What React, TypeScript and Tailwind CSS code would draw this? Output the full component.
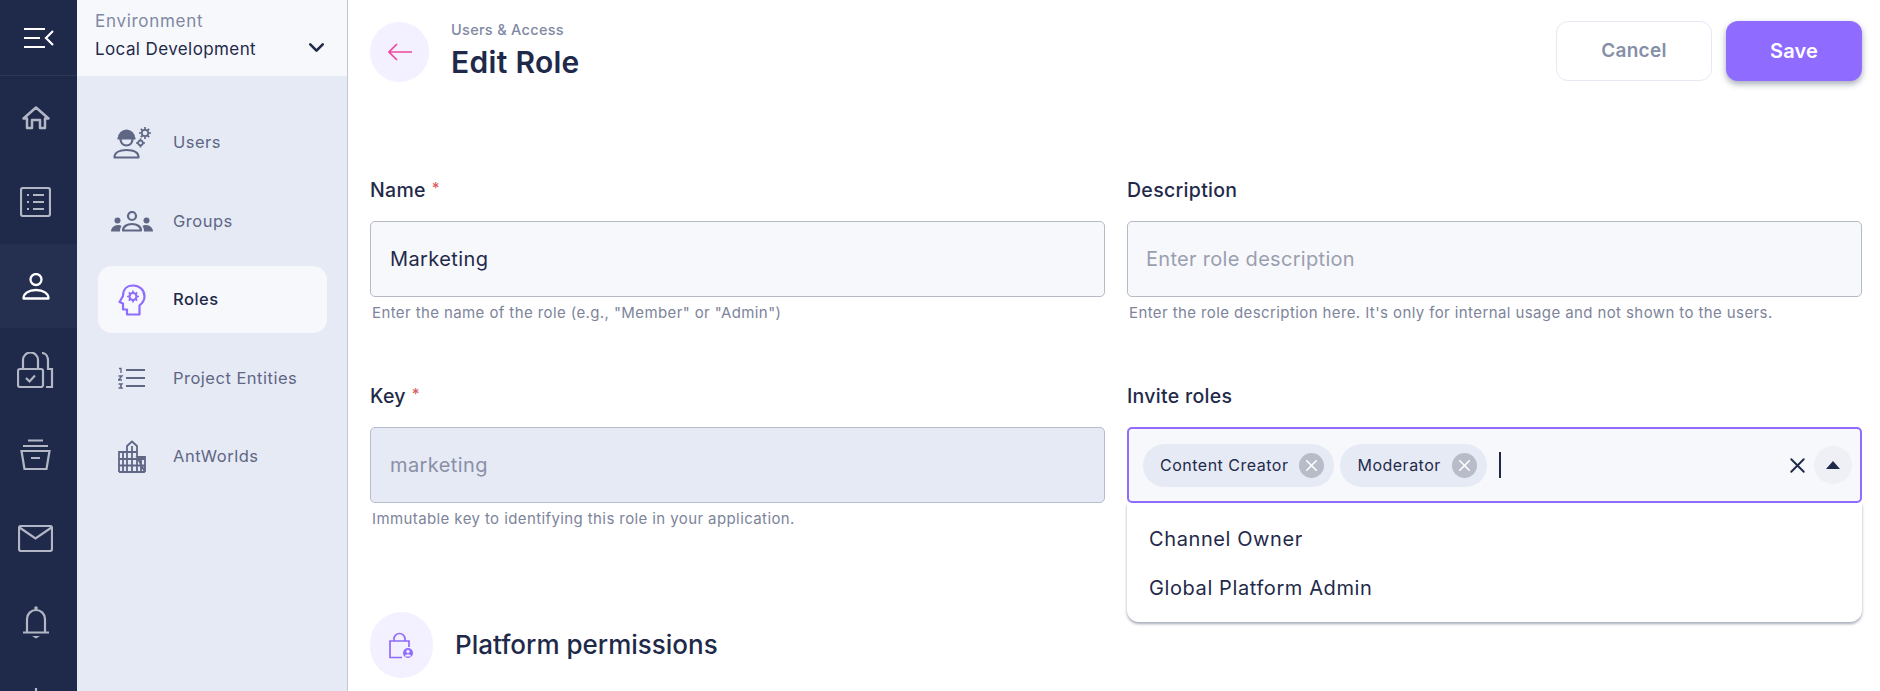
import { ChevronDown, X } from 'lucide-react';

function MenuIcon() {
    return (
        <svg width="32" height="22" viewBox="0 0 32 22" fill="none" stroke="#fff" strokeWidth="2.200">
            <path d="M1 2h21M1 11h16M1 20h21M30 4l-7 7 7 7" />
        </svg>
    );
}

function HomeIcon() {
    return (
        <svg width="28" height="24" viewBox="0 0 28 24" fill="none" stroke="#b3b7c5" strokeWidth="2.500">
            <path d="M1.500 12.500 14 1.500l12.500 11H23V22h-5v-8h-8v8H5v-9.500z" strokeLinejoin="round" />
        </svg>
    );
}

function ListIcon() {
    return (
        <svg width="31" height="30" viewBox="0 0 31 30" fill="none" stroke="#b3b7c5" strokeWidth="2.200">
            <rect x="1" y="1" width="29" height="28" rx="2" />
            <path d="M7 8h2M7 15h2M7 22h2M13 8h11M13 15h11M13 22h11" />
        </svg>
    );
}

function UserIcon() {
    return (
        <svg width="28" height="27" viewBox="0 0 28 27" fill="none" stroke="#fff" strokeWidth="2.300">
            <circle cx="14" cy="6.500" r="5.500" />
            <path d="M1.500 25.500c0-5 5-8.500 12.500-8.500s12.500 3.500 12.500 8.500z" strokeLinejoin="round" />
        </svg>
    );
}

function LocksIcon() {
    return (
        <svg width="37" height="36" viewBox="0 0 37 36" fill="none" stroke="#b3b7c5" strokeWidth="2.200">
            <rect x="1" y="17" width="25" height="18" rx="2" />
            <path d="M6 17V8a7.500 7.500 0 0 1 15 0v9M25 1c4 0 6 3.500 6 8v8M30 17h5v18h-6" />
            <path d="m9 26 3.500 3.500L18 23.500" />
        </svg>
    );
}

function BoxIcon() {
    return (
        <svg width="31" height="31" viewBox="0 0 31 31" fill="none" stroke="#b3b7c5" strokeWidth="2.200">
            <path d="M8 1.500h15M3 7h25M1.500 12h28l-3 18h-22zM11 19h9" />
        </svg>
    );
}

function MailIcon() {
    return (
        <svg width="35" height="27" viewBox="0 0 35 27" fill="none" stroke="#b3b7c5" strokeWidth="2.200">
            <rect x="1" y="1" width="33" height="25" rx="2" />
            <path d="m1.500 2.500 16 11 16-11" />
        </svg>
    );
}

function BellIcon() {
    return (
        <svg width="28" height="34" viewBox="0 0 28 34" fill="none" stroke="#b3b7c5" strokeWidth="2.200">
            <path d="M5 27V14a9 9 0 0 1 18 0v13M1 27.500h26" />
            <circle cx="14" cy="3" r="1.800" fill="#b3b7c5" stroke="none" />
            <path d="M10 31h8l-4 2.500z" fill="#b3b7c5" stroke="none" />
        </svg>
    );
}

function MoreIcon() {
    return (
        <svg width="28" height="36" viewBox="0 0 28 36" fill="none" stroke="#b3b7c5" strokeWidth="2.200">
            <path d="M14 0v36" />
        </svg>
    );
}

function UsersGearIcon() {
    return (
        <svg width="38" height="32" viewBox="0 0 38 32" fill="none" stroke="#5f6785" strokeWidth="2.200">
            <path d="M6 11a7.500 7.500 0 0 1 15 0z" fill="#5f6785" />
            <path d="M4.500 11.500h18M7.500 12c0 4 2.800 6.500 6 6.500s6-2.500 6-6.500" />
            <path d="M1.500 30.500c0-5 5-7.500 12-7.500s12 2.500 12 7.500z" strokeLinejoin="round" />
            <g strokeWidth="1.700">
                <circle cx="32" cy="6" r="3.200" />
                <path d="M32 0v2.500M32 9.500V12M26 6h2.500M35.500 6H38M27.800 1.800l1.800 1.800M34.400 8.400l1.800 1.800M27.800 10.200l1.800-1.800M34.400 3.600l1.800-1.800" />
                <circle cx="27.500" cy="16" r="2.300" />
                <path d="M27.500 11.500v2M27.500 18.500v2M23 16h2M30 16h2" />
            </g>
        </svg>
    );
}

function GroupsIcon() {
    return (
        <svg width="42" height="21" viewBox="0 0 42 21" fill="#5f6785">
            <circle cx="21" cy="5" r="4" fill="none" stroke="#5f6785" strokeWidth="2.200" />
            <path d="M12 19.500c0-4 4-6.500 9-6.500s9 2.500 9 6.500z" fill="none" stroke="#5f6785" strokeWidth="2.200" strokeLinejoin="round" />
            <circle cx="6.500" cy="9.500" r="3" />
            <circle cx="35.500" cy="9.500" r="3" />
            <path d="M0 20.500c0-3.500 3-6.500 7-6.500 1.500 0 2.500.3 3.500 1-1 1.500-1.500 3.500-1.500 5.500zM42 20.500c0-3.500-3-6.500-7-6.500-1.500 0-2.500.3-3.500 1 1 1.500 1.500 3.500 1.500 5.500z" />
        </svg>
    );
}

function RolesIcon() {
    return (
        <svg width="28" height="32" viewBox="0 0 28 32" fill="none" stroke="#8f6bff" strokeWidth="2.200">
            <path d="M9 30.500v-5H5v-6l-3.500-1.500L5 12C5 5.500 9 1.500 15 1.500c6.500 0 11.500 4.500 11.500 11 0 4-2 6.500-5 9v9z" strokeLinejoin="round" />
            <circle cx="15" cy="12.500" r="3.500" />
            <path d="M15 6.500V9M15 16v2.500M9 12.500h2.500M18.500 12.500H21M10.800 8.300l1.800 1.800M17.400 14.900l1.800 1.800M10.800 16.700l1.800-1.800M17.400 10.100l1.800-1.800" strokeWidth="1.700" />
        </svg>
    );
}

function EntitiesIcon() {
    return (
        <svg width="28" height="22" viewBox="0 0 28 22" fill="none" stroke="#5f6785">
            <path d="M8 3h19M8 11h19M8 19h19" strokeWidth="2.200" />
            <path d="M1 1.500h2V6M0.500 9h3.500l-3.500 4h3.500M0.500 17h3.500l-1.500 2 1.500 2h-3.500" strokeWidth="1.300" />
        </svg>
    );
}

function BuildingsIcon() {
    return (
        <svg width="28" height="33" viewBox="0 0 28 33" fill="none" stroke="#5f6785" strokeWidth="1.800">
            <path d="M1 32V12h8M9 32V6l5-4.500L19 6v26M19 17h8v15zM1 32h26M1 19h26M1 25.500h26M9 12h10M5 12v20M14 6v26M23 17v15" />
        </svg>
    );
}

function LockUserIcon() {
    return (
        <svg width="25" height="27" viewBox="0 0 25 27" fill="none" stroke="#8f6bff" strokeWidth="1.700">
            <path d="M13 25.500H1V9h19v6M5 9V7a5.500 5.500 0 0 1 11 0v2" />
            <circle cx="19" cy="21" r="5" fill="#8f6bff" stroke="none" />
            <circle cx="19" cy="19.500" r="1.700" fill="#f3f0ff" stroke="none" />
            <path d="M15.800 24.500c.5-1.500 1.700-2.300 3.200-2.300s2.700.8 3.200 2.300z" fill="#f3f0ff" stroke="none" />
        </svg>
    );
}

const railItems = [
    { icon: <HomeIcon /> },
    { icon: <ListIcon /> },
    { icon: <UserIcon />, active: true },
    { icon: <LocksIcon /> },
    { icon: <BoxIcon /> },
    { icon: <MailIcon /> },
    { icon: <BellIcon /> },
    { icon: <MoreIcon /> },
];

const navItems = [
    { label: 'Users', icon: <UsersGearIcon /> },
    { label: 'Groups', icon: <GroupsIcon /> },
    { label: 'Roles', icon: <RolesIcon />, active: true },
    { label: 'Project Entities', icon: <EntitiesIcon /> },
    { label: 'AntWorlds', icon: <BuildingsIcon /> },
];

function Field({
    label,
    required,
    hint,
    children,
}: {
    label: string;
    required?: boolean;
    hint?: string;
    children: React.ReactNode;
}) {
    return (
        <div className="min-w-0">
            <div className="h-[28px] pt-[2px] mb-[17px] flex items-center text-[19.500px] font-medium tracking-[0.3px] text-[#1f2a4a]">
                {label}
                {required && <span className="ml-[6px] -mt-[6px] text-[15px] text-[#d9605f]">*</span>}
            </div>
            {children}
            {hint && <p className="mt-[7px] h-[18px] pl-[2px] text-[15px] leading-[18px] tracking-[0.4px] text-[#7d849b]">{hint}</p>}
        </div>
    );
}

function Chip({ label }: { label: string }) {
    return (
        <div className="h-[43px] pl-[17px] pr-[10px] flex items-center gap-[11px] rounded-full bg-[#e6eaf5] text-[16px] tracking-[0.5px] text-[#1f2a4a]">
            {label}
            <span className="w-[25px] h-[25px] flex items-center justify-center rounded-full bg-[#b8bcc9]">
                <X size={19} color="#fff" strokeWidth={2} />
            </span>
        </div>
    );
}

export default function App() {
    return (
        <div className="h-[691px] w-[1880px] flex overflow-hidden bg-white [font-family:Inter,sans-serif]">
            <aside className="w-[77px] shrink-0 bg-[#1f2a4a] flex flex-col">
                <div className="h-[76px] shrink-0 flex items-center justify-center border-b border-[#2b3656]">
                    <MenuIcon />
                </div>
                {railItems.map((item, i) => (
                    <div
                        key={i}
                        className={`h-[84px] shrink-0 flex items-center justify-center pr-[6px] ${item.active ? 'bg-[#252f50]' : ''}`}
                    >
                        {item.icon}
                    </div>
                ))}
            </aside>

            <nav className="w-[271px] shrink-0 bg-[#e6eaf5] border-r border-[#c3c7d4] flex flex-col">
                <div className="h-[76px] shrink-0 bg-[#f7f8fc] pl-[18px] pr-[18px] pt-[10px]">
                    <div className="text-[17px] leading-[22px] tracking-[0.7px] text-[#7f88a3]">Environment</div>
                    <div className="mt-[5px] flex items-center justify-between text-[17px] leading-[22px] tracking-[0.4px] text-[#1f2a4a]">
                        Local Development
                        <ChevronDown size={25} strokeWidth={2.500} className="-mt-[2px]" />
                    </div>
                </div>
                <div className="pt-[33px] pl-[21px] pr-[20px] flex flex-col gap-[11.500px]">
                    {navItems.map((item) => (
                        <div
                            key={item.label}
                            className={`h-[67px] flex items-center rounded-[14px] ${item.active ? 'bg-[#f7f8fc] text-[#1f2a4a] font-medium' : 'text-[#5f6785]'}`}
                        >
                            <span className="w-[75px] shrink-0 flex justify-center pr-[8px]">{item.icon}</span>
                            <span className="text-[16.500px] tracking-[0.5px]">{item.label}</span>
                        </div>
                    ))}
                </div>
            </nav>

            <main className="flex-1 min-w-0 pl-[22px] pr-[18px]">
                <header className="pt-[21px] h-[176px] flex items-start justify-between">
                    <div className="flex items-start gap-[22px]">
                        <button className="mt-[1px] w-[59px] h-[60px] rounded-full bg-[#f3f0ff] flex items-center justify-center">
                            <svg width="24" height="18" viewBox="0 0 24 18" fill="none" stroke="#f0479f" strokeWidth="1.700">
                                <path d="M24 9H1M9 1 1 9l8 8" />
                            </svg>
                        </button>
                        <div>
                            <div className="text-[14.500px] leading-[18px] font-medium tracking-[0.3px] text-[#7f88a3]">Users &amp; Access</div>
                            <h1 className="mt-[3px] text-[30px] leading-[40px] font-semibold tracking-[0.3px] text-[#1f2a4a]">Edit Role</h1>
                        </div>
                    </div>
                    <div className="flex gap-[14px]">
                        <button className="w-[156px] h-[60px] rounded-[12px] bg-white border border-[#e6e8f5] text-[19px] font-semibold tracking-[0.3px] text-[#8590a8]">
                            Cancel
                        </button>
                        <button className="w-[136px] h-[60px] rounded-[12px] bg-[#8f6bff] text-[20px] font-semibold tracking-[0.2px] text-white shadow-[0_3px_6px_rgba(31,42,74,0.4)]">
                            Save
                        </button>
                    </div>
                </header>

                <div className="grid grid-cols-2 gap-x-[22px] gap-y-[60px]">
                    <Field label="Name" required hint={'Enter the name of the role (e.g., "Member" or "Admin")'}>
                        <input
                            readOnly
                            value="Marketing"
                            className="w-full h-[76px] px-[19px] rounded-[5px] border border-[#b6b9c6] bg-[#f7f8fc] text-[20px] tracking-[0.4px] text-[#1f2a4a] outline-none"
                        />
                    </Field>
                    <Field
                        label="Description"
                        hint="Enter the role description here. It's only for internal usage and not shown to the users."
                    >
                        <input
                            readOnly
                            placeholder="Enter role description"
                            className="w-full h-[76px] px-[18px] rounded-[5px] border border-[#b6b9c6] bg-[#f7f8fc] text-[20px] tracking-[0.3px] text-[#1f2a4a] placeholder:text-[#9a9fb0] outline-none"
                        />
                    </Field>
                    <Field label="Key" required hint="Immutable key to identifying this role in your application.">
                        <input
                            readOnly
                            disabled
                            value="marketing"
                            className="w-full h-[76px] px-[19px] rounded-[5px] border border-[#b6bbcf] bg-[#e6eaf5] text-[20px] tracking-[0.4px] text-[#8a90a6] outline-none"
                        />
                    </Field>
                    <div className="relative">
                        <Field label="Invite roles">
                            <div className="w-full h-[76px] pl-[14px] pr-[8px] rounded-[5px] border-2 border-[#8f6bff] bg-[#f7f8fc] flex items-center gap-[6px]">
                                <Chip label="Content Creator" />
                                <Chip label="Moderator" />
                                <span className="ml-[6px] w-[2px] h-[26px] bg-[#1f2a4a]" />
                                <span className="ml-auto -mr-[2px]">
                                    <X size={25} color="#1f2a4a" strokeWidth={1.800} />
                                </span>
                                <span className="w-[38px] h-[38px] rounded-full bg-[#eef0f6] flex items-center justify-center">
                                    <svg width="14" height="8" viewBox="0 0 14 8" fill="#1f2a4a">
                                        <path d="M7 0l7 8H0z" />
                                    </svg>
                                </span>
                            </div>
                        </Field>
                        <ul className="absolute left-0 right-0 top-[121px] h-[119px] pt-[11px] rounded-b-[12px] bg-white shadow-[0_2px_3px_rgba(31,42,74,0.4)] text-[20px] tracking-[0.6px] text-[#1f2a4a]">
                            <li className="h-[49px] pl-[22px] flex items-center">Channel Owner</li>
                            <li className="h-[49px] pl-[22px] flex items-center">Global Platform Admin</li>
                        </ul>
                    </div>
                </div>

                <section className="mt-[84px] flex items-center gap-[22px]">
                    <div className="w-[63px] h-[66px] rounded-full bg-[#f3f0ff] flex items-center justify-center">
                        <LockUserIcon />
                    </div>
                    <h2 className="pb-[2px] text-[26px] font-medium text-[#1f2a4a]">Platform permissions</h2>
                </section>
            </main>
        </div>
    );
}
